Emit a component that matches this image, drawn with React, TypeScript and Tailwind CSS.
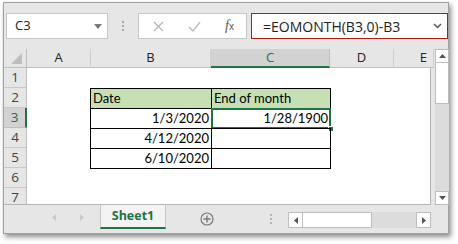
import React from "react";

type Row = {
  n: number;
  b?: string;
  c?: string;
  head?: boolean;
  table?: boolean;
  sel?: boolean;
  bottom?: boolean;
};

const rows: Row[] = [
  { n: 1 },
  { n: 2, b: "Date", c: "End of month", head: true, table: true },
  { n: 3, b: "1/3/2020", c: "1/28/1900", table: true, sel: true },
  { n: 4, b: "4/12/2020", table: true },
  { n: 5, b: "6/10/2020", table: true },
  { n: 6, bottom: true },
  { n: 7 },
];

function GridRow({ r }: { r: Row }) {
  const tableB = r.table
    ? "border-l border-t border-black"
    : r.bottom
    ? "border-t border-black"
    : "";
  const tableC = r.table
    ? "border-l border-t border-r border-black"
    : r.bottom
    ? "border-t border-black"
    : "";
  const bg = r.head ? "bg-[#c6e0b4]" : "";
  const align = r.head ? "justify-start pl-[2px]" : "justify-end pr-[2px]";
  return (
    <div className="flex h-[20px] shrink-0">
      <div
        className={
          r.sel
            ? "w-[23px] shrink-0 flex items-center justify-center bg-[#d2d2d2] border-b border-b-[#bfbfbf] border-r-2 border-r-[#217346] text-[#217346] text-[13.5px] font-['Open_Sans',sans-serif]"
            : "w-[23px] shrink-0 flex items-center justify-center bg-[#e6e6e6] border-b border-b-[#c8c8c8] border-r border-r-[#bfbfbf] text-[#444] text-[13.5px] font-['Open_Sans',sans-serif]"
        }
      >
        {r.n}
      </div>
      <div className="w-[63px] shrink-0 bg-white" />
      <div
        className={`w-[121px] shrink-0 flex items-center ${align} ${tableB} ${bg} text-[13px] text-black font-[Lato,sans-serif]`}
      >
        {r.b}
      </div>
      <div
        className={`relative w-[120px] shrink-0 flex items-center ${align} ${tableC} ${bg} text-[13px] text-black font-[Lato,sans-serif]`}
      >
        {r.c}
        {r.sel && (
          <>
            <div className="absolute -top-[1px] -left-[1px] -right-[1px] -bottom-[1px] border-2 border-[#217346]" />
            <div className="absolute -right-[4px] -bottom-[4px] w-[6px] h-[6px] bg-[#217346] border border-white" />
          </>
        )}
      </div>
      <div className="w-[63px] shrink-0 bg-white" />
      <div className="flex-1 bg-white" />
    </div>
  );
}

function ColHead({
  label,
  w,
  sel,
  right,
}: {
  label: string;
  w: string;
  sel?: boolean;
  right?: boolean;
}) {
  return (
    <div
      className={`${w} shrink-0 flex items-center ${
        right ? "justify-end pr-[6px]" : "justify-center"
      } text-[13px] font-['Open_Sans',sans-serif] ${
        sel
          ? "bg-[#d2d2d2] text-[#217346] border-b-2 border-b-[#217346] border-r border-r-[#bfbfbf]"
          : "bg-[#e6e6e6] text-[#222] border-b border-b-[#bfbfbf] border-r border-r-[#cfcfcf]"
      }`}
    >
      {label}
    </div>
  );
}

export default function App() {
  return (
    <div className="w-[458px] h-[244px] bg-white overflow-hidden">
      <div className="ml-[3px] mt-[2px] w-[446px] h-[232px] border border-[#a0a0a0] bg-[#e6e6e6] shadow-[2px_3px_5px_rgba(0,0,0,0.45)] flex flex-col">
        {/* Toolbar / formula bar */}
        <div className="h-[46px] shrink-0 flex items-start pt-[10px] pl-[2px]">
          <div className="w-[102px] h-[26px] shrink-0 bg-white border border-[#c6c6c6] flex items-center justify-between pl-[8px] pr-[5px]">
            <span className="text-[13px] text-[#222] font-['Open_Sans',sans-serif]">
              C3
            </span>
            <svg width="8" height="5" viewBox="0 0 8 5">
              <polygon points="0,0 8,0 4,5" fill="#7a7a7a" />
            </svg>
          </div>
          <div className="w-[30px] h-[26px] shrink-0 flex flex-col items-center justify-center gap-[2px]">
            <div className="w-[2px] h-[2px] bg-[#a8a8a8]" />
            <div className="w-[2px] h-[2px] bg-[#a8a8a8]" />
            <div className="w-[2px] h-[2px] bg-[#a8a8a8]" />
          </div>
          <div className="w-[109px] h-[26px] shrink-0 bg-white border border-[#c6c6c6] flex items-center">
            <div className="w-[37px] flex justify-center pl-[2px]">
              <svg width="11" height="11" viewBox="0 0 11 11">
                <path
                  d="M1 1 L10 10 M10 1 L1 10"
                  stroke="#b4b4b4"
                  strokeWidth="1.2"
                />
              </svg>
            </div>
            <div className="w-[37px] flex justify-center">
              <svg width="13" height="11" viewBox="0 0 13 11">
                <path
                  d="M1 6 L5 10 L12 1"
                  stroke="#bdbdbd"
                  strokeWidth="1.4"
                  fill="none"
                />
              </svg>
            </div>
            <div className="flex-1 flex justify-center">
              <span className="italic text-[14px] text-[#555] font-['Liberation_Serif',serif] leading-none">
                f
                <span className="text-[10px] not-italic font-['Liberation_Sans',sans-serif]">
                  x
                </span>
              </span>
            </div>
          </div>
          <div className="ml-[4px] flex-1 h-[26px] bg-white border border-[#b31b1b] flex items-center justify-between pl-[11px] pr-[5px]">
            <span className="text-[14px] text-[#222] font-['Open_Sans',sans-serif]">
              =EOMONTH(B3,0)-B3
            </span>
            <svg width="9" height="6" viewBox="0 0 9 6">
              <path
                d="M1 1 L4.5 4.5 L8 1"
                stroke="#555"
                strokeWidth="1.5"
                fill="none"
              />
            </svg>
          </div>
        </div>

        {/* Sheet area */}
        <div className="h-[156px] shrink-0 flex">
          <div className="w-[430px] shrink-0 flex flex-col">
            <div className="h-[19px] shrink-0 flex">
              <div className="w-[23px] shrink-0 bg-[#e6e6e6] border-r border-b border-[#bfbfbf] flex items-end justify-end pr-[4px] pb-[3px]">
                <svg width="11" height="11" viewBox="0 0 11 11">
                  <polygon points="11,0 11,11 0,11" fill="#bdbdbd" />
                </svg>
              </div>
              <ColHead label="A" w="w-[64px]" />
              <ColHead label="B" w="w-[120px]" />
              <ColHead label="C" w="w-[119px]" sel />
              <ColHead label="D" w="w-[64px]" />
              <ColHead label="E" w="flex-1" right />
            </div>
            <div className="w-[427px] h-[137px] overflow-hidden border-r border-b border-[#b4b4b4] bg-white flex flex-col">
              {rows.map((r) => (
                <GridRow key={r.n} r={r} />
              ))}
            </div>
          </div>
          <div className="ml-[1px] w-[14px] shrink-0 flex flex-col">
            <div className="h-[14px] shrink-0 bg-white border border-[#bdbdbd] flex items-center justify-center">
              <svg width="7" height="4" viewBox="0 0 7 4">
                <polygon points="0,4 7,4 3.5,0" fill="#555" />
              </svg>
            </div>
            <div className="h-[41px] shrink-0 bg-white border border-[#bdbdbd] border-t-0" />
            <div className="flex-1 bg-[#dcdcdc]" />
            <div className="h-[14px] shrink-0 bg-white border border-[#bdbdbd] flex items-center justify-center">
              <svg width="7" height="4" viewBox="0 0 7 4">
                <polygon points="0,0 7,0 3.5,4" fill="#555" />
              </svg>
            </div>
          </div>
        </div>

        {/* Tab bar */}
        <div className="flex-1 flex items-start">
          <div className="w-[96px] h-[24px] shrink-0 flex items-center">
            <div className="w-[52px] flex justify-end pr-[0px]">
              <svg width="4" height="7" viewBox="0 0 4 7">
                <polygon points="4,0 4,7 0,3.5" fill="#c8c8c8" />
              </svg>
            </div>
            <div className="w-[28px] flex justify-end">
              <svg width="4" height="7" viewBox="0 0 4 7">
                <polygon points="0,0 0,7 4,3.5" fill="#c8c8c8" />
              </svg>
            </div>
          </div>
          <div className="w-[66px] h-[24px] shrink-0 bg-[#f3f3f3] border-x border-[#c6c6c6] border-b-2 border-b-[#217346] flex items-center justify-center text-[12.5px] font-bold text-[#217346] font-['Open_Sans',sans-serif]">
            Sheet1
          </div>
          <div className="w-[82px] h-[28px] shrink-0 flex items-center justify-center pb-[1px]">
            <svg width="14" height="14" viewBox="0 0 14 14">
              <circle
                cx="7"
                cy="7"
                r="6"
                stroke="#7a7a7a"
                strokeWidth="1.2"
                fill="none"
              />
              <path d="M7 3.5 V10.5 M3.5 7 H10.5" stroke="#7a7a7a" strokeWidth="1.4" />
            </svg>
          </div>
          <div className="w-[40px] h-[28px] shrink-0 flex flex-col items-center justify-center gap-[2px] pl-[6px]">
            <div className="w-[2px] h-[2px] bg-[#b4b4b4]" />
            <div className="w-[2px] h-[2px] bg-[#b4b4b4]" />
            <div className="w-[2px] h-[2px] bg-[#b4b4b4]" />
          </div>
          <div className="mt-[7px] w-[143px] h-[16px] shrink-0 flex">
            <div className="w-[15px] shrink-0 bg-white border border-[#bdbdbd] flex items-center justify-center">
              <svg width="4" height="7" viewBox="0 0 4 7">
                <polygon points="4,0 4,7 0,3.5" fill="#555" />
              </svg>
            </div>
            <div className="w-[69px] shrink-0 bg-white border border-[#bdbdbd] border-l-0" />
            <div className="flex-1 bg-[#dcdcdc]" />
            <div className="w-[15px] shrink-0 bg-white border border-[#bdbdbd] flex items-center justify-center">
              <svg width="4" height="7" viewBox="0 0 4 7">
                <polygon points="0,0 0,7 4,3.5" fill="#555" />
              </svg>
            </div>
          </div>
        </div>
      </div>
    </div>
  );
}
